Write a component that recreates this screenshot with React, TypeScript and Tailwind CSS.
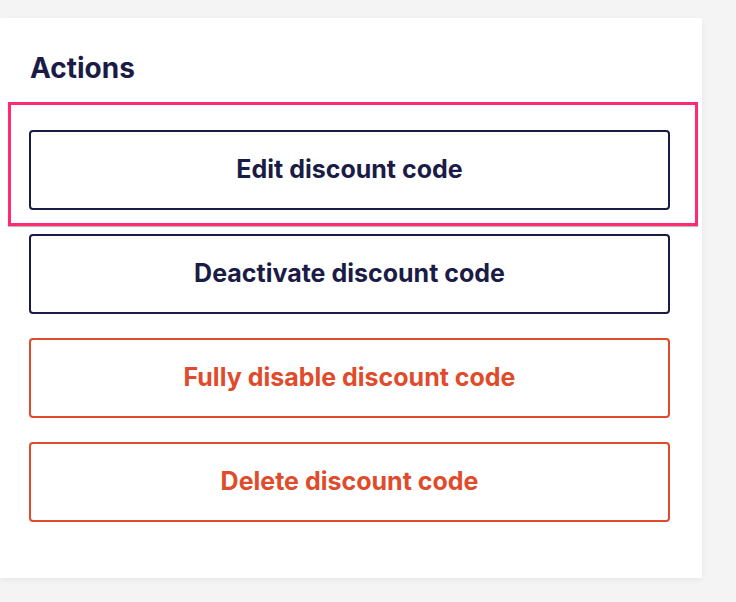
export default function App() {
  const buttons = [
    { label: 'Edit discount code', tone: 'navy', highlight: true },
    { label: 'Deactivate discount code', tone: 'navy' },
    { label: 'Fully disable discount code', tone: 'danger' },
    { label: 'Delete discount code', tone: 'danger' },
  ];

  return (
    <div className="min-h-screen bg-[#f4f4f4] pt-[18px]" style={{ fontFamily: 'Inter, "Noto Sans", sans-serif' }}>
      {/* Actions card */}
      <div className="w-[702px] bg-white pl-[29px] pr-[32px] pt-[34px] pb-[56px] shadow-[0_2px_6px_rgba(0,0,0,0.06)]">
        <h2 className="pl-[1px] text-[28px] leading-[32px] font-bold text-[#1b1c46]">Actions</h2>
        <div className="mt-[46px] flex flex-col gap-[24px]">
          {buttons.map((b) => (
            <div key={b.label} className="relative">
              {b.highlight && (
                <div className="absolute -top-[28px] -left-[21px] -right-[28px] -bottom-[16px] border-[3px] border-[#fe2b72] shadow-[0_1px_1px_rgba(0,0,0,0.25)] pointer-events-none" />
              )}
              <button
                className={
                  b.tone === 'navy'
                    ? 'w-full h-[80px] rounded-[4px] border-2 border-[#1b1c46] bg-white text-[#1b1c46] text-[25px] font-bold'
                    : 'w-full h-[80px] rounded-[4px] border-2 border-[#e04b2b] bg-white text-[#e04b2b] text-[25px] font-bold'
                }
              >
                {b.label}
              </button>
            </div>
          ))}
        </div>
      </div>
    </div>
  );
}
